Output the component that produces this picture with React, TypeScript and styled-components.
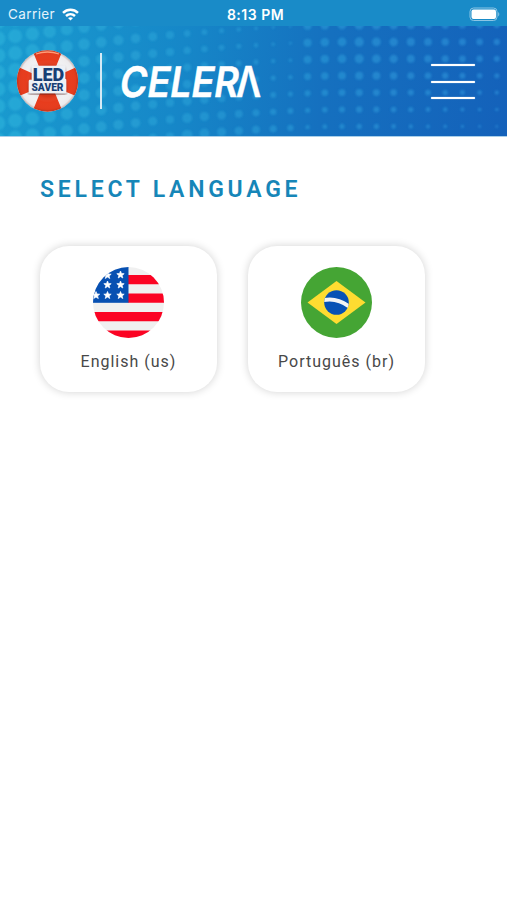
import React from "react";
import styled, { createGlobalStyle } from "styled-components";

const GlobalStyle = createGlobalStyle`
  * { box-sizing: border-box; }
  body { margin: 0; background: #fff; font-family: Roboto, sans-serif; }
`;

const Screen = styled.div`
  width: 100%;
  min-height: 900px;
  background: #fff;
`;

const Header = styled.header`
  position: relative;
  height: 137px;
  overflow: hidden;
  color: #fff;
  border-bottom: 1px solid #a9cfe9;
  background: linear-gradient(98deg, #1a9bcf 0%, #1687c8 36%, #1570bf 64%, #1461ba 100%);
`;

const Pattern = styled.svg`
  position: absolute;
  inset: 0;
`;

const StatusBar = styled.div`
  position: relative;
  display: grid;
  grid-template-columns: 1fr auto 1fr;
  align-items: center;
  height: 26px;
  padding: 2px 7px 0 8px;
  background: #198bc8;
  font-family: Inter, sans-serif;
  font-size: 13.5px;
`;

const Carrier = styled.div`
  display: flex;
  align-items: center;
  gap: 7px;
  color: #e4f3fb;
  letter-spacing: 0.4px;
`;

const Clock = styled.div`
  font-weight: 600;
  font-size: 14px;
  letter-spacing: 0.5px;
  padding-left: 3px;
`;

const BatterySlot = styled.div`
  display: flex;
  justify-content: flex-end;
`;

const BrandBar = styled.div`
  position: relative;
  display: flex;
  align-items: center;
  height: 110px;
  padding: 0 32px 0 16px;
`;

const Divider = styled.div`
  width: 2px;
  height: 56px;
  margin: 0 17px 0 21px;
  background: #d5eaf6;
`;

const MenuButton = styled.button`
  display: flex;
  flex-direction: column;
  justify-content: space-between;
  width: 44px;
  height: 35px;
  margin: 1px 0 0 auto;
  padding: 0;
  border: 0;
  background: none;
`;

const MenuLine = styled.span`
  height: 2px;
  border-radius: 1px;
  background: #fff;
  box-shadow: 0 0 1px #e3f2ff;
`;

const Content = styled.main`
  padding: 39px 40px;
`;

const Title = styled.h1`
  margin: 0;
  color: #1686b8;
  font-size: 23px;
  line-height: 28px;
  font-weight: 600;
  letter-spacing: 3.75px;
  white-space: nowrap;
`;

const Languages = styled.div`
  display: flex;
  gap: 31px;
  margin-top: 42px;
`;

const Card = styled.button`
  display: flex;
  flex-direction: column;
  align-items: center;
  width: 177px;
  height: 146px;
  padding: 21px 0 0;
  border: 0;
  border-radius: 29px;
  background: #fff;
  box-shadow: 0 0 9px rgba(0, 0, 0, 0.18);
`;

const CardLabel = styled.span`
  margin-top: 13px;
  color: #484848;
  font-family: Roboto, sans-serif;
  font-size: 16px;
  line-height: 22px;
  letter-spacing: 1px;
  white-space: nowrap;
`;

const dots = Array.from({ length: 30 }, (_, c) => {
  const x = -2 + c * 17.2;
  const bend = x < 342 ? 8.5 * Math.pow((342 - x) / 155, 1.6) : 0;
  return Array.from({ length: 12 }, (_, row) => {
    const y = 25 + bend + (row - 4) * 16.9;
    const left = 7.2 - x * 0.0185 + (x > 180 ? (y - 60) * 0.02 : 0);
    const right = 4.6 - Math.abs(x - 360) * 0.011 - Math.max(0, y - 55) * 0.026;
    const r = x < 300 ? left : right;
    return { x, y, r: Math.max(1.3, r) };
  });
}).flat();

const DotPattern = () => (
  <Pattern width="507" height="137" viewBox="0 0 507 137" aria-hidden="true">
    <defs>
      <linearGradient id="dotTint" gradientUnits="userSpaceOnUse" x1="0" y1="0" x2="507" y2="0">
        <stop offset="0" stopColor="#2cb0da" />
        <stop offset=".45" stopColor="#2799d4" />
        <stop offset="1" stopColor="#2b8cd7" />
      </linearGradient>
      <filter id="dotEdge"><feGaussianBlur stdDeviation=".8" /></filter>
    </defs>
    <g fill="url(#dotTint)" opacity=".7" filter="url(#dotEdge)">
      {dots.map((d, i) => (
        <path
          key={i}
          d={`M${d.x - d.r} ${d.y}a${d.r} ${d.r} 0 1 0 ${2 * d.r} 0a${d.r} ${d.r} 0 1 0 ${-2 * d.r} 0`}
        />
      ))}
    </g>
  </Pattern>
);

const WifiIcon = () => (
  <svg width="17" height="13" viewBox="0 0 17 13" fill="none" stroke="#fff" strokeWidth="2.5">
    <path d="M1 4.8C5.3.7 11.7.7 16 4.8" />
    <path d="M4 8c2.7-2.5 6.3-2.5 9 0" />
    <path d="M8.5 12.6 6 10.1c1.5-1.3 3.5-1.3 5 0z" fill="#fff" stroke="none" />
  </svg>
);

const BatteryIcon = () => (
  <svg width="31" height="15" viewBox="0 0 31 15">
    <rect x="1" y="1" width="27" height="12.5" rx="3.5" fill="none" stroke="#8cc5e4" />
    <rect x="2.5" y="2.5" width="24.5" height="9.5" rx="2" fill="#fff" />
    <path d="M29.2 5v4.5c1.5-.8 1.5-3.7 0-4.5z" fill="#8cc5e4" />
  </svg>
);

const LifebuoyLogo = () => (
  <svg width="63" height="64" viewBox="0 0 63 64">
    <defs>
      <clipPath id="ringClip"><circle cx="31.5" cy="32" r="30.7" /></clipPath>
      <radialGradient id="ringShade" gradientUnits="userSpaceOnUse" cx="31.5" cy="32" r="30.7">
        <stop offset=".5" stopColor="#5c1008" stopOpacity=".12" />
        <stop offset=".7" stopColor="#fff" stopOpacity="0" />
        <stop offset=".92" stopColor="#65251d" stopOpacity=".03" />
        <stop offset="1" stopColor="#65251d" stopOpacity=".3" />
      </radialGradient>
      <filter id="plateShadow"><feDropShadow dx="0" dy="1.5" stdDeviation="1" floodColor="#541b1b" floodOpacity=".6" /></filter>
    </defs>
    <g clipPath="url(#ringClip)">
      <rect width="63" height="64" fill="#f0f0f2" />
      <path d="M24 20 15-2h33l-9 22zM24 44 15 66h33l-9-22zM20 26-2 16v33l22-9zM43 26 65 16v33l-22-9z" fill="#e73c1d" />
      <circle cx="31.5" cy="32" r="30.7" fill="url(#ringShade)" />
      <path d="M20 5q11.5-4 23 0" stroke="#ff9b78" strokeWidth="1.3" fill="none" />
    </g>
    <path d="M17 18h31v13h1v12H14V32h3z" fill="#edf0f5" stroke="#edf0f5" strokeWidth="2.5" strokeLinejoin="round" filter="url(#plateShadow)" />
    <text fill="#183f75" fontFamily="Roboto, sans-serif" fontWeight="900">
      <tspan x="16.7" y="32" fontSize="18.5" textLength="31.5" lengthAdjust="spacingAndGlyphs">LED</tspan>
      <tspan x="15.5" y="42" fontSize="10.3" textLength="32" lengthAdjust="spacingAndGlyphs">SAVER</tspan>
    </text>
  </svg>
);

const CeleraLogo = () => (
  <svg width="160" height="64" viewBox="0 0 160 64" aria-label="CELERA">
    <g fill="#fff" stroke="#fff" strokeWidth=".5" fontFamily="Inter, sans-serif" fontWeight="600" fontSize="42">
      <g transform="translate(-1 47.5) skewX(-9)">
        <text x="0" y="0" textLength="119" lengthAdjust="spacingAndGlyphs">CELER</text>
      </g>
      <text x="117" y="47.5" textLength="25" lengthAdjust="spacingAndGlyphs">Λ</text>
    </g>
  </svg>
);

const starPath = "l1 2.5 2.7.2-2.1 1.7.7 2.6-2.3-1.4-2.3 1.4.7-2.6-2.1-1.7 2.7-.2z";
const stars = [[27.5, 4], [14.5, 4.5], [14.5, 14], [27.5, 14], [3, 24.5], [14.5, 24.5], [27.5, 24.5]];

const UsFlag = () => (
  <svg width="71" height="71" viewBox="0 0 71 71">
    <clipPath id="usClip"><circle cx="35.5" cy="35.5" r="35.5" /></clipPath>
    <g clipPath="url(#usClip)">
      <rect width="71" height="71" fill="#f0f0f0" />
      <path d="M35 8h36v9.3H35zM35 26.4h36v9.4H35zM0 45h71v9.3H0zM0 63.4h71V71H0z" fill="#fb0323" />
      <rect width="35.5" height="35.8" fill="#0750b2" />
      {stars.map(([x, y]) => <path key={`${x}-${y}`} d={`M${x} ${y}${starPath}`} fill="#fff" stroke="#fff" strokeWidth=".7" />)}
    </g>
  </svg>
);

const BrFlag = () => (
  <svg width="71" height="71" viewBox="0 0 71 71">
    <clipPath id="globeClip"><circle cx="35.5" cy="35.5" r="12.3" /></clipPath>
    <circle cx="35.5" cy="35.5" r="35.5" fill="#45a534" />
    <path d="M35.5 14 64.5 35.5 35.5 57 6.5 35.5z" fill="#fedc31" />
    <circle cx="35.5" cy="35.5" r="12.3" fill="#0752b5" />
    <path d="M22 33.2q14-3 26 6.3" fill="none" stroke="#f2f4f5" strokeWidth="4" clipPath="url(#globeClip)" />
  </svg>
);

export default function App() {
  return (
    <Screen>
      <GlobalStyle />
      <Header>
        <DotPattern />
        <StatusBar>
          <Carrier>Carrier <WifiIcon /></Carrier>
          <Clock>8:13 PM</Clock>
          <BatterySlot><BatteryIcon /></BatterySlot>
        </StatusBar>
        <BrandBar>
          <LifebuoyLogo />
          <Divider />
          <CeleraLogo />
          <MenuButton aria-label="Menu"><MenuLine /><MenuLine /><MenuLine /></MenuButton>
        </BrandBar>
      </Header>
      <Content>
        <Title>SELECT LANGUAGE</Title>
        <Languages>
          <Card><UsFlag /><CardLabel>English (us)</CardLabel></Card>
          <Card><BrFlag /><CardLabel>Português (br)</CardLabel></Card>
        </Languages>
      </Content>
    </Screen>
  );
}
